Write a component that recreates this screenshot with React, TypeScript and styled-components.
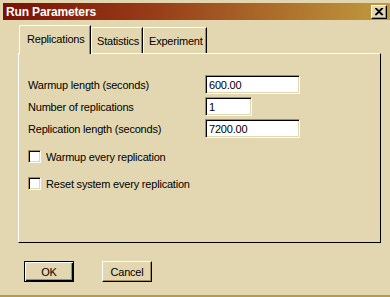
import React from "react";
import styled, { createGlobalStyle } from "styled-components";

const GlobalStyle = createGlobalStyle`
  html, body {
    margin: 0;
    padding: 0;
    background: #e3d7b1;
  }
  * {
    box-sizing: border-box;
  }
`;

const face = "#e3d7b1";
const darkGold = "#a8904c";

const Window = styled.div`
  width: 390px;
  height: 297px;
  background: ${face};
  padding: 3px 0 0 3px;
  border-bottom: 2px solid #b89a48;
  font-family: "Liberation Sans", Arial, sans-serif;
  font-size: 11px;
  letter-spacing: -0.2px;
  color: #000;
  display: flex;
  flex-direction: column;
`;

const TitleBar = styled.div`
  height: 17px;
  display: flex;
  align-items: center;
  justify-content: space-between;
  padding: 0 3px 0 3px;
  background: linear-gradient(to right, #7a1006 0%, #983e18 40%, #c09c3e 100%);
`;

const TitleText = styled.span`
  color: #fff;
  font-weight: bold;
  font-size: 12px;
  letter-spacing: -0.15px;
`;

const CloseButton = styled.div`
  width: 16px;
  height: 14px;
  background: ${face};
  border-top: 1px solid #fff;
  border-left: 1px solid #fff;
  border-right: 1px solid #000;
  border-bottom: 1px solid #000;
  box-shadow: inset -1px -1px 0 ${darkGold};
  display: flex;
  align-items: center;
  justify-content: center;
`;

const Body = styled.div`
  flex: 1;
  padding: 5px 6px 0 15px;
  display: flex;
  flex-direction: column;
`;

const TabStrip = styled.div`
  display: flex;
  align-items: flex-end;
  height: 28px;
  position: relative;
  z-index: 1;
`;

const Tab = styled.div<{ active?: boolean; w: number }>`
  width: ${({ w }) => w}px;
  height: ${({ active }) => (active ? 29 : 26)}px;
  margin-bottom: ${({ active }) => (active ? -1 : 0)}px;
  margin-left: ${({ active }) => (active ? 1 : 0)}px;
  background: ${face};
  border-top: 1px solid #fff;
  border-left: 1px solid #fff;
  border-right: 1px solid #000;
  border-top-left-radius: 2px;
  box-shadow: inset -1px 0 0 ${darkGold};
  display: flex;
  align-items: ${({ active }) => (active ? "flex-start" : "center")};
  padding-top: ${({ active }) => (active ? 7 : 1)}px;
  padding-left: ${({ active }) => (active ? 7 : 5)}px;
  font-size: 11px;
  white-space: nowrap;
`;

const Panel = styled.div`
  height: 190px;
  width: 363px;
  background: ${face};
  border-top: 1px solid #fff;
  border-left: 1px solid #fff;
  border-right: 1px solid #000;
  border-bottom: 1px solid #000;
  padding: 21px 0 0 9px;
`;

const FormGrid = styled.div`
  display: grid;
  grid-template-columns: 177px auto;
  row-gap: 3px;
  align-items: center;
`;

const Label = styled.span`
  white-space: nowrap;
`;

const TextBox = styled.div<{ w: number }>`
  width: ${({ w }) => w}px;
  height: 19px;
  background: #fff;
  border-top: 1px solid ${darkGold};
  border-left: 1px solid ${darkGold};
  border-right: 1px solid #fff;
  border-bottom: 1px solid #fff;
  box-shadow: inset 1px 1px 0 #000, inset -1px -1px 0 ${face};
  padding: 1px 0 0 3px;
  display: flex;
  align-items: center;
  font-size: 11px;
`;

const CheckList = styled.div`
  margin-top: 12px;
  display: flex;
  flex-direction: column;
  gap: 14px;
`;

const CheckRow = styled.div`
  display: flex;
  align-items: center;
  gap: 5px;
  height: 13px;
`;

const CheckBox = styled.div`
  width: 13px;
  height: 13px;
  background: #fff;
  border-top: 1px solid ${darkGold};
  border-left: 1px solid ${darkGold};
  border-right: 1px solid #fff;
  border-bottom: 1px solid #fff;
  box-shadow: inset 1px 1px 0 #000, inset -1px -1px 0 ${face};
`;

const ButtonRow = styled.div`
  display: flex;
  gap: 28px;
  margin-top: 18px;
  padding-left: 6px;
`;

const Button = styled.div<{ isDefault?: boolean }>`
  width: 50px;
  height: 21px;
  background: ${face};
  display: flex;
  align-items: center;
  justify-content: center;
  font-size: 11px;
  border-top: 1px solid ${({ isDefault }) => (isDefault ? "#000" : "#fff")};
  border-left: 1px solid ${({ isDefault }) => (isDefault ? "#000" : "#fff")};
  border-right: 1px solid #000;
  border-bottom: 1px solid #000;
  box-shadow: ${({ isDefault }) =>
    isDefault
      ? `inset 1px 1px 0 #fff, inset -1px -1px 0 #000, inset -2px -2px 0 ${darkGold}`
      : `inset -1px -1px 0 ${darkGold}`};
`;

const fields = [
  { label: "Warmup length (seconds)", value: "600.00", w: 95 },
  { label: "Number of replications", value: "1", w: 47 },
  { label: "Replication length (seconds)", value: "7200.00", w: 95 },
];

const tabs = [
  { name: "Replications", w: 72, active: true },
  { name: "Statistics", w: 52 },
  { name: "Experiment", w: 64 },
];

export default function App() {
  return (
    <>
      <GlobalStyle />
      <Window>
        <TitleBar>
          <TitleText>Run Parameters</TitleText>
          <CloseButton>
            <svg width="9" height="8" viewBox="0 0 9 8">
              <path d="M1 0 L8 7 M0 0 L7 7 M8 0 L1 7 M7 0 L0 7" stroke="#000" strokeWidth="1.2" />
            </svg>
          </CloseButton>
        </TitleBar>
        <Body>
          <TabStrip>
            {tabs.map((t) => (
              <Tab key={t.name} active={t.active} w={t.w}>
                {t.name}
              </Tab>
            ))}
          </TabStrip>
          <Panel>
            <FormGrid>
              {fields.map((f) => (
                <React.Fragment key={f.label}>
                  <Label>{f.label}</Label>
                  <TextBox w={f.w}>{f.value}</TextBox>
                </React.Fragment>
              ))}
            </FormGrid>
            <CheckList>
              <CheckRow>
                <CheckBox />
                <Label>Warmup every replication</Label>
              </CheckRow>
              <CheckRow>
                <CheckBox />
                <Label>Reset system every replication</Label>
              </CheckRow>
            </CheckList>
          </Panel>
          <ButtonRow>
            <Button isDefault>OK</Button>
            <Button>Cancel</Button>
          </ButtonRow>
        </Body>
      </Window>
    </>
  );
}
